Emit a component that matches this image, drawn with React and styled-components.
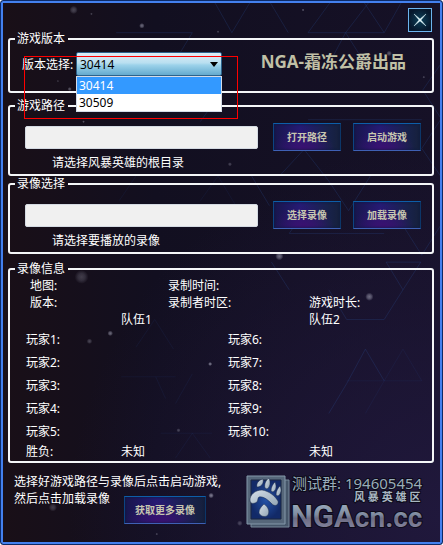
import { useState } from "react";
import styled, { createGlobalStyle } from "styled-components";

const versions = ["30414", "30509"];
const players = [
  ["玩家1:", "玩家6:"],
  ["玩家2:", "玩家7:"],
  ["玩家3:", "玩家8:"],
  ["玩家4:", "玩家9:"],
  ["玩家5:", "玩家10:"],
];

// x, y, radius, opacity
const stars = [
  [72, 7, 3, 0.3],
  [90, 11, 1, 0.3],
  [141, 23, 2, 0.5],
  [218, 29, 1, 0.3],
  [304, 7, 1, 0.4],
  [391, 51, 2, 0.4],
  [426, 75, 1, 0.3],
  [68, 87, 1.5, 0.4],
  [56, 79, 1, 0.2],
  [82, 120, 1, 0.4],
  [230, 163, 1.5, 0.3],
  [280, 256, 3, 0.5],
  [80, 277, 5, 0.25],
  [109, 334, 2, 0.5],
  [88, 342, 2, 0.3],
  [210, 365, 1.5, 0.6],
  [371, 297, 3, 0.5],
  [178, 432, 1.5, 0.3],
  [211, 498, 2, 0.6],
  [51, 510, 3, 0.25],
  [156, 537, 1, 0.3],
  [240, 526, 2, 0.3],
];

const Backdrop = () => (
  <StyledBackdrop
    viewBox="0 0 443 545"
    preserveAspectRatio="xMidYMid slice"
    aria-hidden="true"
  >
    <defs>
      <radialGradient id="star">
        <stop offset="0" stopColor="#c8c8d8" />
        <stop offset="0.5" stopColor="#a8a8bc" stopOpacity="0.8" />
        <stop offset="1" stopColor="#a8a8bc" stopOpacity="0" />
      </radialGradient>
    </defs>
    <g fill="none" stroke="#2c4f9a" strokeOpacity="0.25">
      <path d="M115 30H192L175 58M215 0L232 30L250 0M271 0L289 30M331 0L309 30H386L366 0M347 30L331 60M347 30L370 0M347 30L366 60M386 30L403 0" />
      <path d="M443 62L425 88L443 116M424 147L443 118M424 147L443 175M309 118H424M305 148L330 180L350 210L372 175M252 175L270 205M280 175L305 148" />
      <path d="M388 262H423L405 290L388 262M290 290L272 262M405 290L386 320H348L330 290M367 350L348 385L330 415M367 350L386 382" />
      <path d="M405 225L424 255L443 225M290 233H386M290 233L309 205M200 120L218 95" />
    </g>
    <g fill="none" stroke="#2c4f9a" strokeOpacity="0.12">
      <path d="M405 350L424 382H348M405 350L386 382L367 415M135 348L154 320L173 350M120 378H175M175 405L192 375M155 378L165 400" />
      <path d="M160 435H212M192 435L175 460M192 435L210 460M200 200L218 175L236 205M118 200L135 175" />
    </g>
    {stars.map(([x, y, r, opacity]) => (
      <circle
        key={`${x}-${y}`}
        cx={x}
        cy={y}
        r={r * 1.4}
        fill="url(#star)"
        opacity={opacity}
      />
    ))}
  </StyledBackdrop>
);

const NgaLogo = () => (
  <svg width="182" height="60" viewBox="0 0 182 60" role="img" aria-label="NGA">
    <defs>
      <linearGradient id="metal" x1="0" y1="0" x2="0" y2="1">
        <stop offset="0" stopColor="#a9bccb" />
        <stop offset="0.45" stopColor="#7f8ba0" />
        <stop offset="0.55" stopColor="#6c6c84" />
        <stop offset="1" stopColor="#9494ae" />
      </linearGradient>
      <linearGradient id="claw" x1="0" y1="0" x2="1" y2="1">
        <stop offset="0" stopColor="#d6e0e8" />
        <stop offset="1" stopColor="#93a6b6" />
      </linearGradient>
      <radialGradient id="panel">
        <stop offset="0" stopColor="#2453a8" />
        <stop offset="1" stopColor="#122a68" />
      </radialGradient>
    </defs>
    <path d="M5 7H43V54H5Z" fill="#46566a" stroke="#76899a" />
    <path d="M1 3H39V51H1Z" fill="#56677a" stroke="#8499aa" />
    <path d="M5 7H35V46H5Z" fill="url(#panel)" stroke="#1b2740" />
    <g fill="url(#claw)" stroke="#1b2a48" strokeWidth="0.5">
      <path d="M4 27C4 22 9 17 16 17C23 18 29 23 32 28C33 32 29 34 26 31C23 28 18 23 13 24C11 25 13 29 9 30C6 31 4 30 4 27Z" />
      <path d="M11 14C10 10 13 7 17 6C18 10 16 13 12 14Z" />
      <path d="M19 15C18 11 20 7 23 5C25 10 24 14 21 16Z" />
      <path d="M25 18C25 14 27 11 29 9C31 14 30 17 27 19Z" />
      <path d="M30 22C30 18 32 15 34 13C36 17 35 21 32 23Z" />
      <path d="M18 31C22 34 24 38 22 42C19 45 14 43 13 40C13 36 15 34 18 31Z" />
    </g>
    <g stroke="#0c0a18" strokeWidth="2" paintOrder="stroke">
      <LogoText x="46" y="16" $size={15} fill="#98acb8">
        测试群: 194605454
      </LogoText>
      <LogoText x="108" y="28" $size={11} $bold fill="#a9b7c2">
        风 暴 英 雄 区
      </LogoText>
      <LogoText x="45" y="54" $size={31} $heavy fill="url(#metal)">
        NGA
        <LogoText as="tspan" $size={28} $heavy>
          cn.cc
        </LogoText>
      </LogoText>
    </g>
  </svg>
);

const VersionSelect = () => {
  const [version, setVersion] = useState(versions[0]);
  const [isOpen, setIsOpen] = useState(true);

  const handleMouseDown = (e) => {
    e.preventDefault();
    setIsOpen((prevOpen) => !prevOpen);
  };

  const handlePick = (value) => {
    setVersion(value);
    setIsOpen(false);
  };

  return (
    <SelectWrapper>
      <select
        id="version"
        value={version}
        onChange={(e) => setVersion(e.target.value)}
        onMouseDown={handleMouseDown}
      >
        {versions.map((value) => (
          <option key={value}>{value}</option>
        ))}
      </select>
      <svg width="8" height="5" viewBox="0 0 8 5" aria-hidden="true">
        <path d="M0 0H8L4 5Z" fill="#000" />
      </svg>
      {isOpen && (
        <OptionList role="listbox" aria-label="版本选择">
          {versions.map((value) => (
            <OptionItem
              key={value}
              role="option"
              aria-selected={value === version}
              $selected={value === version}
              onClick={() => handlePick(value)}
            >
              {value}
            </OptionItem>
          ))}
        </OptionList>
      )}
    </SelectWrapper>
  );
};

const PathGroup = ({ id, legend, hint, actions }) => (
  <Group>
    <legend>{legend}</legend>
    <PathRow>
      <PathInput id={id} type="text" />
      {actions.map((action) => (
        <GlowButton key={action} type="button">
          {action}
        </GlowButton>
      ))}
    </PathRow>
    <Hint htmlFor={id}>{hint}</Hint>
  </Group>
);

const App = () => (
  <>
    <GlobalStyle />
    <StyledWindow>
      <Backdrop />
      <TitleBar>
        <CloseButton type="button" aria-label="关闭">
          <svg width="14" height="14" viewBox="0 0 14 14">
            <path
              d="M1 1L7 6L13 1L8 7L13 13L7 8L1 13L6 7Z"
              fill="#e6f6f8"
              stroke="#c4e4ea"
              strokeWidth="0.5"
            />
          </svg>
        </CloseButton>
      </TitleBar>

      <Group>
        <legend>游戏版本</legend>
        <VersionRow>
          <label htmlFor="version">版本选择:</label>
          <VersionSelect />
          <h1>NGA-霜冻公爵出品</h1>
          <Highlight />
        </VersionRow>
      </Group>

      <Stack>
        <PathGroup
          id="game-path"
          legend="游戏路径"
          hint="请选择风暴英雄的根目录"
          actions={["打开路径", "启动游戏"]}
        />
        <PathGroup
          id="replay-path"
          legend="录像选择"
          hint="请选择要播放的录像"
          actions={["选择录像", "加载录像"]}
        />
      </Stack>

      <Group>
        <legend>录像信息</legend>
        <ReplayInfo>
          <InfoGrid>
            <span>地图:</span>
            <span>录制时间:</span>
            <span />
            <span>版本:</span>
            <span>录制者时区:</span>
            <span>游戏时长:</span>
          </InfoGrid>
          <TeamGrid>
            <span />
            <span>队伍1</span>
            <span>队伍2</span>
          </TeamGrid>
          <PlayerGrid>
            {players.flat().map((player) => (
              <span key={player}>{player}</span>
            ))}
          </PlayerGrid>
          <TeamGrid>
            <span>胜负:</span>
            <span>未知</span>
            <span>未知</span>
          </TeamGrid>
        </ReplayInfo>
      </Group>

      <Footer>
        <FooterText>
          <p>选择好游戏路径与录像后点击启动游戏,</p>
          <div>
            <p>然后点击加载录像</p>
            <GlowButton type="button" $wide>
              获取更多录像
            </GlowButton>
          </div>
        </FooterText>
        <NgaLogo />
      </Footer>
    </StyledWindow>
  </>
);

export default App;

const GlobalStyle = createGlobalStyle`
  * {
    box-sizing: border-box;
  }

  body {
    margin: 0;
    background: #fff;
    color: #fff;
    font-family: "Noto Sans", "Noto Sans CJK SC", sans-serif;
    font-size: 12px;
    line-height: 17px;
  }

  h1, p {
    margin: 0;
  }

  button, input, select {
    font-family: inherit;
  }
`;

const StyledWindow = styled.main`
  position: relative;
  isolation: isolate;
  overflow: hidden;
  min-height: 100vh;
  padding: 7px 8px 11px 7px;
  border: 1px solid #0d2a66;
  border-radius: 3px;
  box-shadow: inset 0 0 0 2px #4380ee;
  background: radial-gradient(circle at 100% 95%, #20183c, transparent 55%),
    linear-gradient(90deg, #190f17, #120f20 35%, #161127);
`;

const StyledBackdrop = styled.svg`
  position: absolute;
  inset: 2px;
  z-index: -1;
  width: calc(100% - 4px);
  height: calc(100% - 4px);
`;

const TitleBar = styled.header`
  display: flex;
  justify-content: flex-end;
  padding-right: 2px;
`;

const CloseButton = styled.button`
  display: flex;
  align-items: center;
  justify-content: center;
  width: 24px;
  height: 24px;
  padding: 0;
  border: 1px solid #6cb4ee;
  background: radial-gradient(circle, #0c4058, #06182c 75%);
`;

const Group = styled.fieldset`
  min-width: 0;
  margin: 0;
  padding: 0;
  border: 2px solid #f4f6f8;
  border-radius: 3px;

  > legend {
    margin-left: 5px;
    padding: 0 3px 0 2px;
    line-height: 14px;
  }
`;

const Stack = styled.div`
  display: flex;
  flex-direction: column;
  gap: 1px;
  margin: 6px 0 8px;
`;

const VersionRow = styled.div`
  position: relative;
  display: flex;
  align-items: center;
  padding: 6px 26px 15px 12px;

  > label {
    width: 54px;
    white-space: nowrap;
  }

  > h1 {
    align-self: flex-start;
    margin-left: auto;
    color: #c0c0a6;
    font-family: "Open Sans", "Noto Sans CJK SC", sans-serif;
    font-size: 17px;
    line-height: 20px;
    font-weight: 700;
    white-space: nowrap;
  }
`;

const SelectWrapper = styled.div`
  position: relative;
  width: 146px;

  > select {
    display: block;
    width: 100%;
    height: 24px;
    padding: 0 3px;
    appearance: none;
    border: 1px solid #2c628b;
    border-radius: 2px;
    background: linear-gradient(#deedf5, #b9dff0 45%, #9cd2ea 55%, #64aace);
    color: #000;
    font-size: 12px;
  }

  > svg {
    position: absolute;
    top: 10px;
    right: 4px;
    pointer-events: none;
  }
`;

const OptionList = styled.ul`
  position: absolute;
  top: 100%;
  left: 0;
  z-index: 2;
  width: 100%;
  margin: 0;
  padding: 0;
  border: 1px solid #d4dce8;
  background: #fff;
  list-style: none;
`;

const OptionItem = styled.li`
  padding: 0 2px;
  background: ${(props) => (props.$selected ? "#3399ff" : "#fff")};
  color: ${(props) => (props.$selected ? "#fff" : "#000")};
`;

// red frame drawn over the version picker
const Highlight = styled.div`
  position: absolute;
  top: 10px;
  left: 14px;
  z-index: 3;
  width: 214px;
  height: 63px;
  border: 1px solid #ff0000;
  pointer-events: none;
`;

const PathRow = styled.div`
  display: flex;
  align-items: center;
  gap: 12px;
  padding: 10px 11px 2px 15px;
`;

const PathInput = styled.input`
  flex: 1;
  min-width: 0;
  height: 23px;
  margin-right: 3px;
  padding: 0 4px;
  border: 1px solid #d4dae2;
  border-radius: 2px;
  background: #f0f0f0;
  color: #000;
  font-size: 12px;
`;

const GlowButton = styled.button`
  flex: none;
  width: ${(props) => (props.$wide ? "82px" : "68px")};
  height: 28px;
  padding: 0;
  border: 1px solid;
  border-color: #0d5ea8 #0c3668 #3f60b4 #0c4482;
  background: radial-gradient(ellipse at 45% 100%, #3c1070, transparent 60%),
    linear-gradient(90deg, #18164c, #261a74 40%, #18224c 80%, #16203c);
  box-shadow: inset 0 0 3px #0c1c40;
  color: #c6c6b0;
  font-size: 10px;
  line-height: 14px;
  font-weight: 700;
`;

const Hint = styled.label`
  display: block;
  padding: 1px 0 3px 42px;
`;

const ReplayInfo = styled.div`
  padding: 1px 0;
`;

const InfoGrid = styled.div`
  display: grid;
  grid-template-columns: 138fr 141fr 123fr;
  padding-left: 20px;
`;

const TeamGrid = styled.div`
  display: grid;
  grid-template-columns: 95fr 188fr 123fr;
  padding-left: 16px;
`;

const PlayerGrid = styled.div`
  display: grid;
  grid-template-columns: 202fr 204fr;
  padding-left: 16px;
  line-height: 23px;
`;

const Footer = styled.footer`
  display: flex;
  align-items: flex-start;
  justify-content: space-between;
  padding: 10px 6px 0;
`;

const FooterText = styled.div`
  white-space: nowrap;

  > div {
    display: flex;
    align-items: flex-start;
    gap: 14px;
  }

  > div > button {
    margin-top: 6px;
  }
`;

const LogoText = styled.text`
  font-family: ${(props) =>
    props.$heavy
      ? "Roboto, sans-serif"
      : '"Noto Sans", "Noto Sans CJK SC", sans-serif'};
  font-size: ${(props) => props.$size}px;
  font-weight: ${(props) => (props.$bold || props.$heavy ? 700 : 400)};
`;
